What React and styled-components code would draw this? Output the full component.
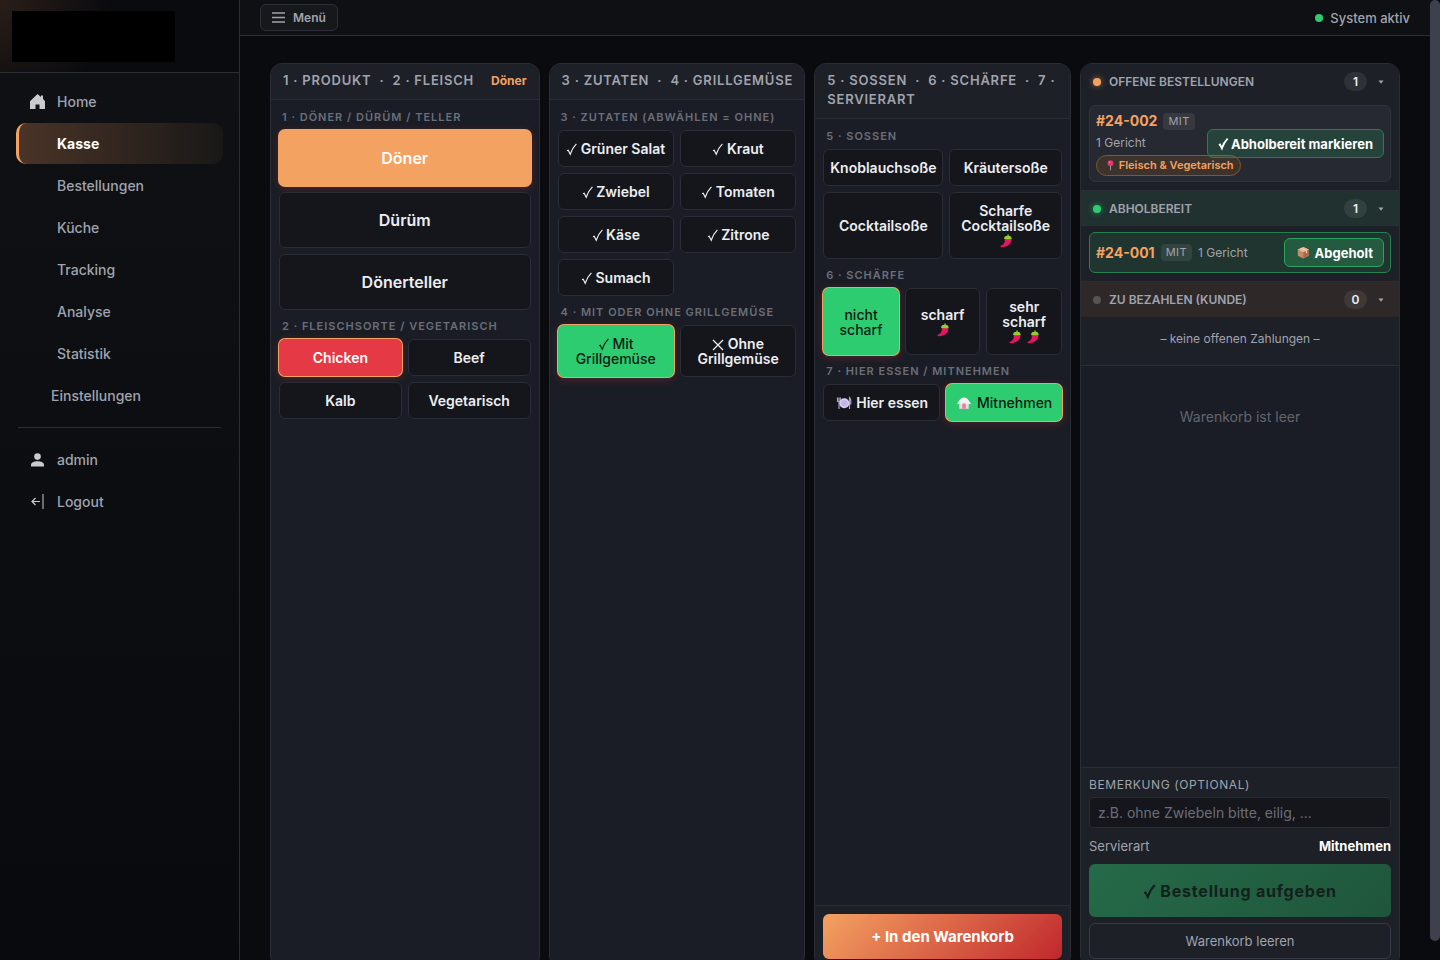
import React, { useState } from 'react';
import styled, { createGlobalStyle, css } from 'styled-components';

const GlobalStyle = createGlobalStyle`
  *, *::before, *::after {
    box-sizing: border-box;
  }

  html {
    scrollbar-width: none;
  }

  body {
    margin: 0;
    background: #0a0b0f;
    color: #eceef2;
    font-family: Inter, 'Noto Sans', sans-serif;
  }

  button, input {
    font-family: inherit;
  }
`;

const Shell = styled.div`
  display: grid;
  grid-template-columns: 240px minmax(0, 1fr) 10px;
  min-height: 100vh;
`;

const ScrollTrack = styled.div`
  position: sticky;
  top: 0;
  height: 100vh;
  background: #0a0b0f;
`;

const ScrollThumb = styled.div`
  height: 98%;
  border-radius: 5px;
  background: #3e404d;
`;

const Sidebar = styled.aside`
  position: sticky;
  top: 0;
  height: 100vh;
  border-right: 1px solid #2a2c36;
  background: linear-gradient(180deg, #101115 0%, #090a0d 100%);
`;

const Brand = styled.div`
  height: 73px;
  padding: 11px 12px;
  border-bottom: 1px solid #2a2c36;
  background: radial-gradient(circle at 0 0, #2a1e18 0, #0a0b0f 110px);
`;

const Logo = styled.div`
  width: 163px;
  height: 51px;
  background: #000;
`;

const Nav = styled.nav`
  display: flex;
  flex-direction: column;
  gap: 1px;
  padding: 8px 16px;
`;

const NavLink = styled.a`
  display: flex;
  align-items: center;
  gap: 11px;
  height: 41px;
  padding-left: 10px;
  border-left: 3px solid transparent;
  border-radius: 10px;
  color: #a0a3ad;
  font-size: 14px;
  font-weight: 500;
  text-decoration: none;

  ${({ $active }) => $active && css`
    border-left-color: #f4a261;
    background: linear-gradient(90deg, #4a3427 0%, #191817 100%);
    color: #fff;
    font-weight: 700;
  `}
`;

const NavIcon = styled.span`
  display: flex;
  justify-content: center;
  width: 17px;
  color: #c9cbd0;
`;

const NavToggle = styled.button`
  height: 41px;
  padding: 0 35px;
  border: 0;
  background: none;
  color: #a0a3ad;
  font-size: 14px;
  font-weight: 500;
  text-align: left;
`;

const Divider = styled.hr`
  width: calc(100% - 4px);
  margin: 10px 2px;
  border: 0;
  border-top: 1px solid #2a2c36;
`;

const Content = styled.div`
  display: flex;
  flex-direction: column;
`;

const Topbar = styled.header`
  display: flex;
  align-items: center;
  justify-content: space-between;
  height: 36px;
  padding: 0 20px;
  border-bottom: 1px solid #2a2c36;
  background: #0f1014;
`;

const MenuButton = styled.button`
  display: flex;
  align-items: center;
  gap: 8px;
  height: 27px;
  padding: 0 11px;
  border: 1px solid #2c2e39;
  border-radius: 6px;
  background: #17181c;
  color: #a0a3ad;
  font-size: 12px;
  font-weight: 600;
`;

const SystemState = styled.div`
  display: flex;
  align-items: center;
  gap: 7px;
  color: #a0a3ad;
  font-size: 13px;
  font-weight: 500;
`;

const Dot = styled.span`
  width: 8px;
  height: 8px;
  border-radius: 50%;
  background: ${({ $color }) => $color};
  box-shadow: ${({ $color, $glow }) => ($glow ? `0 0 6px ${$color}99` : 'none')};
`;

const Board = styled.main`
  display: grid;
  grid-template-columns: 1.05fr 1fr 1fr 320px;
  gap: 9px;
  min-height: calc(100vh - 18px);
  padding: 27px 30px 10px;
`;

const Panel = styled.section`
  display: flex;
  flex-direction: column;
  min-width: 0;
  min-height: calc(100vh - 55px);
  border: 1px solid #2a2c36;
  border-radius: 12px;
  background: #1a1d25;
  overflow: hidden;
`;

const PanelHead = styled.header`
  display: flex;
  align-items: center;
  justify-content: space-between;
  padding: 7px 8px 9px 12px;
  border-bottom: 1px solid #2a2c36;
  background: #1d2027;
`;

const PanelTitle = styled.h2`
  margin: 0;
  color: #a0a3ad;
  font-size: 13px;
  font-weight: 600;
  line-height: 19px;
  letter-spacing: 0.06em;
`;

const Picked = styled.span`
  padding-right: 4px;
  color: #f4a261;
  font-size: 12px;
  font-weight: 700;
`;

const PanelBody = styled.div`
  flex: 1;
  padding: 1px 8px;
`;

const GroupLabel = styled.h3`
  margin: 0;
  padding: 8px 3px 5px;
  color: #6b6e79;
  font-size: 11px;
  font-weight: 600;
  line-height: 16px;
  letter-spacing: 1px;
`;

const Options = styled.div`
  display: grid;
  grid-template-columns: repeat(${({ $cols }) => $cols}, 1fr);
  gap: 6px;
`;

const tones = {
  orange: css`background: #f4a261; border-color: #f4a261; color: #fff;`,
  red: css`background: #e63946; border-color: #e63946; color: #fff;`,
  green: css`background: #2ecc71; border-color: #2ecc71; color: #0b1a12; font-weight: 500;`,
};

const Option = styled.button`
  min-height: ${({ $large }) => ($large ? 56 : 37)}px;
  padding: 10px 6px;
  border: 1px solid #2a2c36;
  border-radius: 6px;
  background: #15161b;
  color: #eceef2;
  font-size: ${({ $large }) => ($large ? 16 : 14)}px;
  font-weight: 600;
  line-height: 15px;

  ${({ $tone }) => $tone && css`
    box-shadow: 0 0 0 1px #f4a261, 0 2px 10px rgba(230, 57, 70, 0.3);
    ${tones[$tone]}
  `}
`;

const Glyph = styled.svg`
  display: inline-block;
  height: 1em;
  vertical-align: -0.15em;
  overflow: visible;
`;

const PanelFoot = styled.footer`
  padding: 8px;
  border-top: 1px solid #2a2c36;
  background: #1d2027;
`;

const AddButton = styled.button`
  display: block;
  width: 100%;
  height: 45px;
  border: 0;
  border-radius: 6px;
  background: linear-gradient(135deg, #f4a261, #c1272d);
  color: #fff;
  font-size: 15px;
  font-weight: 700;
`;

const Queue = styled.section`
  background: #1e2028;

  & + & {
    border-top: 1px solid #2a2c36;
  }
`;

const QueueHead = styled.button`
  display: flex;
  align-items: center;
  gap: 8px;
  width: 100%;
  height: 35px;
  padding: 0 12px;
  border: 0;
  background: ${({ $bg }) => $bg};
  color: #a0a3ad;
  font-size: 12px;
  font-weight: 600;
  text-align: left;
`;

const QueueTitle = styled.span`
  flex: 1;
`;

const Count = styled.span`
  min-width: 23px;
  height: 19px;
  border-radius: 10px;
  background: rgba(255, 255, 255, 0.08);
  color: #eceef2;
  line-height: 19px;
  text-align: center;
`;

const Caret = styled.svg`
  width: 12px;
  height: 4px;
`;

const QueueBody = styled.div`
  padding: 6px 8px 8px;
`;

const QueueEmpty = styled.p`
  margin: 0;
  padding: 12px 8px 16px;
  border-bottom: 1px solid #2a2c36;
  color: #a0a3ad;
  font-size: 12px;
  line-height: 20px;
  text-align: center;
`;

const Ticket = styled.article`
  display: flex;
  align-items: center;
  gap: 6px;
  padding: 5px 6px;
  border: 1px solid ${({ $ready }) => ($ready ? '#27814f' : '#31343d')};
  border-radius: 6px;
  background: ${({ $ready }) => ($ready ? '#20352f' : '#262931')};
`;

const TicketInfo = styled.div`
  display: flex;
  flex: 1;
  flex-wrap: wrap;
  align-items: center;
  gap: 3px 6px;
  min-width: 0;
  color: #a0a3ad;
  font-size: 12px;
  line-height: 18px;
`;

const TicketNumber = styled.strong`
  color: #f4a261;
  font-size: 14px;
  font-weight: 700;
  line-height: 20px;
`;

const Chip = styled.span`
  padding: 0 5px;
  border-radius: 4px;
  background: rgba(255, 255, 255, 0.08);
  font-size: 11px;
  line-height: 17px;
  letter-spacing: 0.04em;
`;

const DietTag = styled.span`
  padding: 0 6px 0 8px;
  border: 1px solid #7d5a27;
  border-radius: 11px;
  background: #3d332c;
  color: #f4a261;
  font-size: 11px;
  font-weight: 600;
  line-height: 19px;
  white-space: nowrap;
`;

const TicketButton = styled.button`
  flex: none;
  height: 29px;
  padding: 0 10px;
  border: 1px solid ${({ $strong }) => ($strong ? '#2ba45f' : '#278046')};
  border-radius: 6px;
  background: ${({ $strong }) => ($strong ? 'rgba(46, 204, 113, 0.25)' : 'rgba(46, 204, 113, 0.16)')};
  color: #fff;
  font-size: 13px;
  font-weight: 700;
`;

const CartEmpty = styled.p`
  flex: 1;
  margin: 0;
  padding-top: 41px;
  color: #62656f;
  font-size: 14px;
  line-height: 20px;
  text-align: center;
`;

const NoteLabel = styled.label`
  display: block;
  margin-bottom: 3px;
  color: #a0a3ad;
  font-size: 12px;
  line-height: 18px;
  letter-spacing: 0.05em;
`;

const NoteInput = styled.input`
  display: block;
  width: 100%;
  height: 31px;
  padding: 0 8px;
  border: 1px solid #2a2c36;
  border-radius: 4px;
  background: #15161b;
  color: #eceef2;
  font-size: 14px;

  &::placeholder {
    color: #6b6e79;
  }
`;

const Summary = styled.div`
  display: flex;
  justify-content: space-between;
  padding: 8px 0;
  color: #a0a3ad;
  font-size: 13px;
  line-height: 20px;

  strong {
    color: #fff;
    font-weight: 700;
  }
`;

const OrderButton = styled.button`
  display: block;
  width: 100%;
  height: 53px;
  border: 0;
  border-radius: 6px;
  background: linear-gradient(135deg, #256a49, #1f563b);
  color: #14201c;
  font-size: 16px;
  font-weight: 700;
  letter-spacing: 0.05em;
`;

const ClearButton = styled.button`
  display: block;
  width: 100%;
  height: 36px;
  margin-top: 6px;
  border: 1px solid #373a46;
  border-radius: 6px;
  background: none;
  color: #a0a3ad;
  font-size: 13px;
`;

const HomeIcon = () => (
  <svg width="15" height="16" viewBox="0 0 15 16" fill="currentColor">
    <path d="M7.5 0 11 3V1.500h2v3.300L15 7.200V15H9.500v-4.500h-4V15H0V7.200Z" />
  </svg>
);

const UserIcon = () => (
  <svg width="13" height="14" viewBox="0 0 13 14" fill="currentColor">
    <circle cx="6.5" cy="3.6" r="3.3" />
    <path d="M0 13.5V11.8C0 9.6 2.9 8.2 6.5 8.2S13 9.6 13 11.8V13.5Z" />
  </svg>
);

const LogoutIcon = () => (
  <svg width="13" height="15" viewBox="0 0 13 15" fill="none" stroke="currentColor">
    <path d="M9 7.5H1M4.5 4 1 7.5 4.5 11" strokeWidth="1.2" />
    <path d="M12 0v15" />
  </svg>
);

const MenuIcon = () => (
  <svg width="13" height="11" viewBox="0 0 13 11" stroke="currentColor">
    <path d="M0 1h13M0 5.500h13M0 10h13" strokeWidth="1.4" />
  </svg>
);

const Check = ({ weight = 1.2 }) => (
  <Glyph viewBox="0 0 11 14" fill="none" stroke="currentColor" strokeWidth={weight}>
    <path d="M1 8.800 2.200 8.200 4.200 12.200Q6.200 6 10.400 1.800" />
  </Glyph>
);

const Cross = () => (
  <Glyph viewBox="0 0 12 14" fill="none" stroke="currentColor" strokeWidth="1.3">
    <path d="M1 3 11 13M11 3 1 13" />
  </Glyph>
);

const Chili = () => (
  <Glyph viewBox="-3 0 18 14">
    <path d="M4.6 4.2H11.400C11.800 9 8.500 13.200 1 13.200 0.200 12.600 0.300 11.800 1.300 11.500 4.400 10.500 5.200 7.800 4.600 4.200Z" fill="#e3175f" />
    <path d="M4.200 5.200C3.800 2.600 5.500 1.700 7.300 1.700L7.700 0.300H8.500L8.700 1.700C10.700 1.900 11.900 3 11.500 5.200 10.200 4.400 9.500 5.500 8 5.300 6.500 5.500 5.400 4.600 4.200 5.200Z" fill="#93cf2f" />
  </Glyph>
);

const Plate = () => (
  <Glyph viewBox="-2 0 18 14">
    <path d="M0.500 1.500V5.500H3.500V1.500M2 1.500V13M12.500 13V1.500Q14.200 3 13.700 8.500" fill="none" stroke="#a79fb8" strokeWidth="1.2" />
    <circle cx="7.300" cy="7.200" r="5" fill="#d8cdf2" />
    <circle cx="7.300" cy="7.200" r="3.300" fill="#c4b5e8" />
  </Glyph>
);

const Hut = () => (
  <Glyph viewBox="-2 0 18 14">
    <path d="M2.300 6.500H11.700V12.800H2.300Z" fill="#e6dfe9" />
    <path d="M0 7.200C2.500 5.500 2.600 1.800 7 1.500 11.400 1.800 11.500 5.500 14 7.200L12.500 8.200 7 6.800 1.500 8.200Z" fill="#f4f0f5" />
    <path d="M5.200 12.800V9C5.200 7 8.900 7 8.900 9V12.800Z" fill="#ee7fa0" />
  </Glyph>
);

const Pin = () => (
  <Glyph viewBox="-3 0 14 14">
    <path d="M4 6V13" stroke="#8e8c98" strokeWidth="1.500" />
    <circle cx="4" cy="4" r="3.700" fill="#e8306f" />
    <circle cx="3" cy="3" r="1.100" fill="#f88aac" />
  </Glyph>
);

const Box = () => (
  <Glyph viewBox="-2 0 18 14">
    <path d="M7 1 13 3.800V10.500L7 13.500 1 10.500V3.800Z" fill="#c98b67" />
    <path d="M7 1 13 3.800 7 6.700 1 3.800Z" fill="#e8b893" />
    <path d="M7 6.700 13 3.800V10.500L7 13.500Z" fill="#a86a4c" />
    <path d="M3.600 2.600 9.800 5.300V8L11 7.500V4.800L5 2Z" fill="#efd3b8" />
  </Glyph>
);

const pages = ['Bestellungen', 'Küche', 'Tracking', 'Analyse', 'Statistik'];

const products = [
  { id: 'Döner', label: 'Döner' },
  { id: 'Dürüm', label: 'Dürüm' },
  { id: 'Dönerteller', label: 'Dönerteller' },
];

const meats = [
  { id: 'Chicken', label: 'Chicken' },
  { id: 'Beef', label: 'Beef' },
  { id: 'Kalb', label: 'Kalb' },
  { id: 'Vegetarisch', label: 'Vegetarisch' },
];

const toppings = ['Grüner Salat', 'Kraut', 'Zwiebel', 'Tomaten', 'Käse', 'Zitrone', 'Sumach'];

const grill = [
  { id: 'mit', label: <><Check /> Mit Grillgemüse</> },
  { id: 'ohne', label: <><Cross /> Ohne Grillgemüse</> },
];

const sauces = [
  { id: 'knoblauch', label: 'Knoblauchsoße' },
  { id: 'kraeuter', label: 'Kräutersoße' },
  { id: 'cocktail', label: 'Cocktailsoße' },
  { id: 'scharf', label: <>Scharfe Cocktailsoße <Chili /></> },
];

const heat = [
  { id: 'nicht', label: 'nicht scharf' },
  { id: 'scharf', label: <>scharf <Chili /></> },
  { id: 'sehr', label: <>sehr scharf <Chili /><Chili /></> },
];

const serving = [
  { id: 'Hier essen', label: <><Plate /> Hier essen</> },
  { id: 'Mitnehmen', label: <><Hut /> Mitnehmen</> },
];

const Choice = ({ items, cols, tone, large, value, onChange }) => (
  <Options $cols={cols}>
    {items.map(({ id, label }) => (
      <Option
        key={id}
        type="button"
        aria-pressed={id === value}
        $large={large}
        $tone={id === value ? tone : undefined}
        onClick={() => onChange(id)}
      >
        {label}
      </Option>
    ))}
  </Options>
);

const QueueHeader = ({ title, count, color, bg, glow }) => (
  <QueueHead type="button" $bg={bg}>
    <Dot $color={color} $glow={glow} />
    <QueueTitle>{title}</QueueTitle>
    <Count>{count}</Count>
    <Caret viewBox="0 0 12 4" fill="currentColor">
      <path d="M3.500 0.500H8.500L6 3.800Z" />
    </Caret>
  </QueueHead>
);

const App = () => {
  const [product, setProduct] = useState('Döner');
  const [meat, setMeat] = useState('Chicken');
  const [without, setWithout] = useState([]);
  const [veg, setVeg] = useState('mit');
  const [sauce, setSauce] = useState(null);
  const [spicy, setSpicy] = useState('nicht');
  const [mode, setMode] = useState('Mitnehmen');

  const toggleTopping = name =>
    setWithout(list => (list.includes(name) ? list.filter(n => n !== name) : [...list, name]));

  return (
    <>
      <GlobalStyle />
      <Shell>
        <Sidebar>
          <Brand>
            <Logo />
          </Brand>
          <Nav>
            <NavLink href="#home"><NavIcon><HomeIcon /></NavIcon>Home</NavLink>
            <NavLink href="#kasse" $active><NavIcon />Kasse</NavLink>
            {pages.map(page => (
              <NavLink key={page} href={`#${page}`}><NavIcon />{page}</NavLink>
            ))}
            <NavToggle type="button">Einstellungen</NavToggle>
            <Divider />
            <NavLink href="#admin"><NavIcon><UserIcon /></NavIcon>admin</NavLink>
            <NavLink href="#logout"><NavIcon><LogoutIcon /></NavIcon>Logout</NavLink>
          </Nav>
        </Sidebar>

        <Content>
          <Topbar>
            <MenuButton type="button"><MenuIcon />Menü</MenuButton>
            <SystemState><Dot $color="#2ecc71" />System aktiv</SystemState>
          </Topbar>

          <Board>
            <Panel>
              <PanelHead>
                <PanelTitle>1 · PRODUKT &nbsp;·&nbsp; 2 · FLEISCH</PanelTitle>
                <Picked>{product}</Picked>
              </PanelHead>
              <PanelBody>
                <GroupLabel>1 · DÖNER / DÜRÜM / TELLER</GroupLabel>
                <Choice items={products} cols={1} tone="orange" large value={product} onChange={setProduct} />
                <GroupLabel>2 · FLEISCHSORTE / VEGETARISCH</GroupLabel>
                <Choice items={meats} cols={2} tone="red" value={meat} onChange={setMeat} />
              </PanelBody>
            </Panel>

            <Panel>
              <PanelHead>
                <PanelTitle>3 · ZUTATEN &nbsp;·&nbsp; 4 · GRILLGEMÜSE</PanelTitle>
              </PanelHead>
              <PanelBody>
                <GroupLabel>3 · ZUTATEN (ABWÄHLEN = OHNE)</GroupLabel>
                <Options $cols={2}>
                  {toppings.map(name => (
                    <Option key={name} type="button" onClick={() => toggleTopping(name)}>
                      {without.includes(name) ? <Cross /> : <Check />} {name}
                    </Option>
                  ))}
                </Options>
                <GroupLabel>4 · MIT ODER OHNE GRILLGEMÜSE</GroupLabel>
                <Choice items={grill} cols={2} tone="green" value={veg} onChange={setVeg} />
              </PanelBody>
            </Panel>

            <Panel>
              <PanelHead>
                <PanelTitle>5 · SOSSEN &nbsp;·&nbsp; 6 · SCHÄRFE &nbsp;·&nbsp; 7 · SERVIERART</PanelTitle>
              </PanelHead>
              <PanelBody>
                <GroupLabel>5 · SOSSEN</GroupLabel>
                <Choice items={sauces} cols={2} tone="green" value={sauce} onChange={setSauce} />
                <GroupLabel>6 · SCHÄRFE</GroupLabel>
                <Choice items={heat} cols={3} tone="green" value={spicy} onChange={setSpicy} />
                <GroupLabel>7 · HIER ESSEN / MITNEHMEN</GroupLabel>
                <Choice items={serving} cols={2} tone="green" value={mode} onChange={setMode} />
              </PanelBody>
              <PanelFoot>
                <AddButton type="button">+ In den Warenkorb</AddButton>
              </PanelFoot>
            </Panel>

            <Panel>
              <Queue>
                <QueueHeader title="OFFENE BESTELLUNGEN" count={1} color="#f4a261" bg="#1e2028" glow />
                <QueueBody>
                  <Ticket>
                    <TicketInfo>
                      <TicketNumber>#24-002</TicketNumber>
                      <Chip>MIT</Chip>
                      <span>1 Gericht</span>
                      <DietTag><Pin /> Fleisch &amp; Vegetarisch</DietTag>
                    </TicketInfo>
                    <TicketButton type="button"><Check weight={2} /> Abholbereit markieren</TicketButton>
                  </Ticket>
                </QueueBody>
              </Queue>
              <Queue>
                <QueueHeader title="ABHOLBEREIT" count={1} color="#2ecc71" bg="#20312f" glow />
                <QueueBody>
                  <Ticket $ready>
                    <TicketInfo>
                      <TicketNumber>#24-001</TicketNumber>
                      <Chip>MIT</Chip>
                      <span>1 Gericht</span>
                    </TicketInfo>
                    <TicketButton type="button" $strong><Box /> Abgeholt</TicketButton>
                  </Ticket>
                </QueueBody>
              </Queue>
              <Queue>
                <QueueHeader title="ZU BEZAHLEN (KUNDE)" count={0} color="#555555" bg="#2e2829" />
                <QueueEmpty>– keine offenen Zahlungen –</QueueEmpty>
              </Queue>
              <CartEmpty>Warenkorb ist leer</CartEmpty>
              <PanelFoot>
                <NoteLabel htmlFor="note">BEMERKUNG (OPTIONAL)</NoteLabel>
                <NoteInput id="note" type="text" placeholder="z.B. ohne Zwiebeln bitte, eilig, ..." />
                <Summary>
                  <span>Servierart</span>
                  <strong>{mode}</strong>
                </Summary>
                <OrderButton type="button"><Check weight={1.8} /> Bestellung aufgeben</OrderButton>
                <ClearButton type="button">Warenkorb leeren</ClearButton>
              </PanelFoot>
            </Panel>
          </Board>
        </Content>

        <ScrollTrack>
          <ScrollThumb />
        </ScrollTrack>
      </Shell>
    </>
  );
};

export default App;
